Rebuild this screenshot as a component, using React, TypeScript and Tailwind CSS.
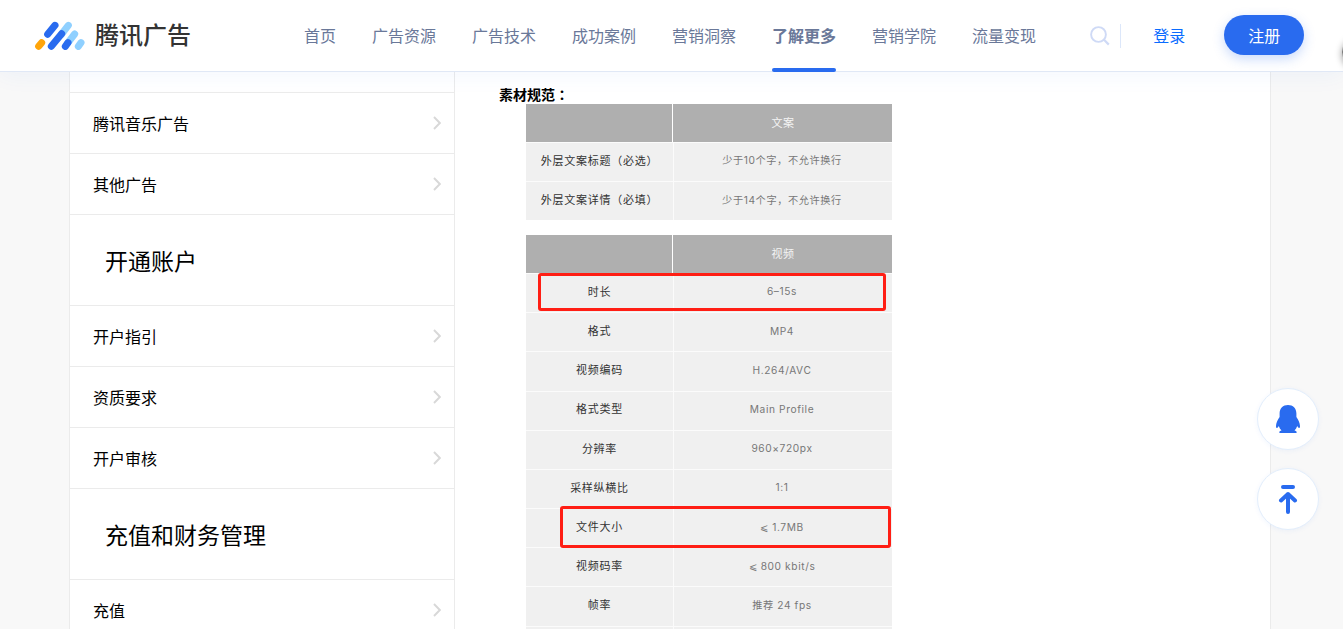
import clsx from 'clsx';

const navItems = ['首页', '广告资源', '广告技术', '成功案例', '营销洞察', '了解更多', '营销学院', '流量变现'];
const activeNav = '了解更多';

const menu = [
  { label: '腾讯音乐广告' },
  { label: '其他广告' },
  { label: '开通账户', heading: true },
  { label: '开户指引' },
  { label: '资质要求' },
  { label: '开户审核' },
  { label: '充值和财务管理', heading: true },
  { label: '充值' },
];

const copyRows = [
  ['外层文案标题（必选）', '少于10个字，不允许换行'],
  ['外层文案详情（必填）', '少于14个字，不允许换行'],
];

const videoRows = [
  ['时长', '6–15s'],
  ['格式', 'MP4'],
  ['视频编码', 'H.264/AVC'],
  ['格式类型', 'Main Profile'],
  ['分辨率', '960×720px'],
  ['采样纵横比', '1:1'],
  ['文件大小', '⩽ 1.7MB'],
  ['视频码率', '⩽ 800 kbit/s'],
  ['帧率', '推荐 24 fps'],
  ['', ''],
];

function Logo() {
  return (
    <a className="flex items-center">
      <svg viewBox="42 60 156 90" className="h-[30px] w-[52px]" fill="none" strokeWidth="21" strokeLinecap="round">
        <path d="M65 125L56 136" stroke="#ffa50a" />
        <path d="M145 73L125 99M164 99L144 125M183 125L175 136" stroke="#8fd0ff" />
        <path d="M105 73L83 100M125 98L94 136M144 125L136 136" stroke="#296bef" />
      </svg>
      <span className="ml-[9px] -mt-[3px] text-2xl leading-[30px] font-medium text-[#333]">腾讯广告</span>
    </a>
  );
}

function Header() {
  return (
    <header className="relative z-10 flex h-[72px] shrink-0 items-center border-b border-[#e0e8f6] bg-white pl-[34px] shadow-[0_2px_24px_rgba(41,107,239,0.06)]">
      <Logo />
      <nav className="ml-[113px] flex h-full gap-9">
        {navItems.map((item) => (
          <a
            key={item}
            className={clsx(
              'relative pt-[23px] text-base leading-6 whitespace-nowrap text-[#6a7899]',
              item === activeNav && 'font-bold',
            )}
          >
            {item}
            {item === activeNav ? (
              <span className="absolute inset-x-0 -bottom-px h-1 rounded-full bg-[#296bef]" />
            ) : null}
          </a>
        ))}
      </nav>
      <svg viewBox="0 0 20 20" className="ml-[54px] h-5 w-5" fill="none" stroke="#cfdaf6" strokeWidth="1.9">
        <circle cx="8.5" cy="8.5" r="7.4" />
        <path d="M14 13.8L18.8 18.6" strokeWidth="2.2" />
      </svg>
      <span className="ml-[10px] h-6 w-px bg-[#dce7fa]" />
      <a className="-mt-0.5 ml-8 text-base leading-6 text-[#0a6cff]">登录</a>
      <button className="-mt-px ml-[39px] h-10 w-20 rounded-full bg-[#296bef] text-base text-white shadow-[0_4px_12px_rgba(41,107,239,0.25)]">
        注册
      </button>
    </header>
  );
}

function Sidebar() {
  return (
    <aside className="w-[386px] shrink-0 border-x border-[#ebebeb]">
      <div className="h-[21px] border-b border-[#ebebeb]" />
      {menu.map(({ label, heading }) =>
        heading ? (
          <h2 key={label} className="h-[91px] border-b border-[#ebebeb] pl-[35px] text-[23px] leading-[90px] text-black">
            {label}
          </h2>
        ) : (
          <a
            key={label}
            className="flex h-[61px] items-center justify-between border-b border-[#ebebeb] pr-[13px] pl-[23px] text-base text-black"
          >
            <span>{label}</span>
            <svg viewBox="0 0 8 14" className="h-[14px] w-2" fill="none" stroke="#d8d8d8" strokeWidth="1.9">
              <path d="M1 1L6.8 7L1 13" />
            </svg>
          </a>
        ),
      )}
    </aside>
  );
}

function SpecTable({ title, rows }: { title: string; rows: string[][] }) {
  return (
    <div className="w-[366px] font-['Inter','Noto_Sans_CJK_SC',sans-serif]">
      <div className="flex h-[38px] text-[11px] tracking-[0.5px] text-[#f4f4f4]">
        <div className="w-[146px] bg-[#afafaf]" />
        <div className="ml-px flex flex-1 items-center justify-center bg-[#afafaf] pl-px">{title}</div>
      </div>
      {rows.map(([name, value], index) => (
        <div key={index} className="flex h-[39.2px] border-t border-[#fbfbfb] bg-[#f0f0f0] pb-0.5">
          <div className="flex w-[147px] items-center justify-center text-[11px] tracking-[0.75px] whitespace-nowrap text-[#333]">
            {name}
          </div>
          <div className="-mb-0.5 flex flex-1 items-center justify-center border-l border-[#fbfbfb] pr-0.5 pb-0.5 text-[10.2px] tracking-[0.6px] whitespace-nowrap text-[#777]">
            {value}
          </div>
        </div>
      ))}
    </div>
  );
}

function Content() {
  return (
    <main className="flex-1 pt-[12px] pl-[44px]">
      <p className="h-5 font-['Noto_Sans_CJK_JP',sans-serif] text-sm leading-5 font-bold text-black">素材规范：</p>
      <div className="relative ml-[27px] w-[366px]">
        <SpecTable title="文案" rows={copyRows} />
        <div className="mt-[14.6px]">
          <SpecTable title="视频" rows={videoRows} />
        </div>
        <div className="absolute top-[169px] left-3 h-[38px] w-[348px] rounded-[3px] border-3 border-[#ff1e14]" />
        <div className="absolute top-[402px] left-[34px] h-[42px] w-[331px] rounded-[3px] border-3 border-[#ff1e14]" />
      </div>
    </main>
  );
}

const floatClass =
  'flex h-[62px] w-[62px] items-center justify-center rounded-full border border-[#e3eefc] bg-white shadow-[0_1px_5px_rgba(41,107,239,0.06)]';

function FloatingButtons() {
  return (
    <div className="absolute top-[388px] right-6 z-20 flex flex-col gap-[18px]">
      <button className={floatClass}>
        <svg viewBox="0 0 24 28" className="h-7 w-6" fill="#296bef">
          <path d="M12 0C7 0 3.6 3.4 3.6 8.5V12C1.5 14.8 .1 18 0 21C0 22.3 .2 23 .8 23C1.5 23 2.2 22.2 2.8 21C3.3 22.7 4.2 24.2 5.5 25.4C4.2 25.8 3.2 26.5 3.2 27.2C3.2 27.7 3.7 28 4.5 28H19.5C20.3 28 20.8 27.7 20.8 27.2C20.8 26.5 19.8 25.8 18.5 25.4C19.8 24.2 20.7 22.7 21.2 21C21.8 22.2 22.5 23 23.2 23C23.8 23 24 22.3 24 21C23.9 18 22.5 14.8 20.4 12V8.5C20.4 3.4 17 0 12 0Z" />
        </svg>
      </button>
      <button className={floatClass}>
        <svg
          viewBox="0 0 20 30"
          className="h-[30px] w-5"
          fill="none"
          stroke="#296bef"
          strokeWidth="4"
          strokeLinecap="round"
          strokeLinejoin="round"
        >
          <path d="M5 3H15M10 10V28M3 16.5L10 10L17 16.5" />
        </svg>
      </button>
    </div>
  );
}

export default function App() {
  return (
    <div className="relative flex h-[629px] w-[1343px] flex-col overflow-hidden bg-[#f8f8f8] font-['Noto_Sans_CJK_SC',sans-serif]">
      <Header />
      <div className="ml-[69px] flex min-h-0 w-[1202px] flex-1 border-r border-[#ebebeb] bg-white">
        <Sidebar />
        <Content />
      </div>
      <FloatingButtons />
      <div className="absolute top-[36px] -right-[31px] z-20 h-8 w-8 rounded-full border border-[#777] bg-white shadow-[0_2px_7px_rgba(0,0,0,0.4)]" />
    </div>
  );
}
